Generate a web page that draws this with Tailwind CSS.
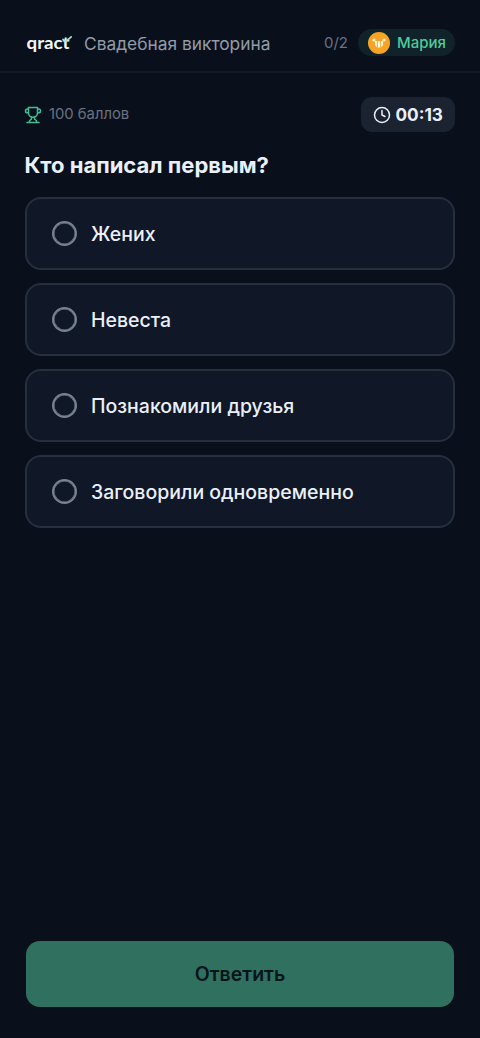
<!DOCTYPE html>
<html lang="ru">
<head>
<meta charset="utf-8">
<meta name="viewport" content="width=device-width, initial-scale=1">
<title>Свадебная викторина</title>
<script src="https://cdn.jsdelivr.net/npm/@tailwindcss/browser@4"></script>
</head>
<body class="bg-[#09101b] font-['Inter',sans-serif] text-[#eaf0fa]">
<div class="flex h-[1038px] w-[480px] flex-col">
  <header class="flex h-[73px] items-center border-b-2 border-[#121a26] pt-[14px] pr-[25px] pl-[26px]">
    <svg class="mr-[10px] h-[24px] w-[48px] shrink-0" viewBox="0 0 48 24">
      <text x="0.5" y="17.500" textLength="43" lengthAdjust="spacingAndGlyphs" font-family="Lato, sans-serif" font-weight="700" font-size="17.500" fill="#f4f8fa">qract</text>
      <path d="M37 8.300l2.800 2.200l5.400-4.600" fill="none" stroke="#a5e3d5" stroke-width="1.700" stroke-linecap="round" stroke-linejoin="round"/>
    </svg>
    <h1 class="pt-[2px] text-[17.350px] leading-6 whitespace-nowrap text-[#949ba8]">Свадебная викторина</h1>
    <span class="ml-auto pt-px text-[15px] leading-6 text-[#697283]">0/2</span>
    <div class="ml-[10px] flex h-[27px] w-[97px] items-center rounded-full bg-[#11232a] pl-[10px]">
      <svg class="mr-[7px] size-[22px] shrink-0" viewBox="0 0 22 22">
        <circle cx="11" cy="11" r="11" fill="#f7a325"/>
        <path d="M7 9h8v3.200c0 2-1.600 3.300-4 3.300s-4-1.300-4-3.300z" fill="#fff6df"/>
        <circle cx="6" cy="8" r="1.600" fill="#fff6df"/><circle cx="16" cy="8" r="1.600" fill="#fff6df"/>
        <path d="M9.400 8.500v6.500M12.600 8.500v6.500" fill="none" stroke="#f7a325" stroke-width=".9"/>
      </svg>
      <span class="text-[15px] leading-6 font-medium text-[#4fca9c]">Мария</span>
    </div>
  </header>
  <main class="flex flex-1 flex-col px-[25px] pt-[24px]">
    <div class="flex h-[35px] items-center">
      <svg class="-ml-px mr-[7px] size-[18px] shrink-0" viewBox="0 0 24 24" fill="none" stroke="#45bd91" stroke-width="2" stroke-linecap="round" stroke-linejoin="round">
        <path d="M6 9H4.500a2.500 2.500 0 0 1 0-5H6M18 9h1.500a2.500 2.500 0 0 0 0-5H18M4 22h16M10 14.660V17c0 .55-.47.98-.97 1.210C7.850 18.750 7 20.240 7 22M14 14.660V17c0 .55.47.98.97 1.210C16.150 18.750 17 20.240 17 22M18 2H6v7a6 6 0 0 0 12 0V2Z"/>
      </svg>
      <span class="text-[14.800px] text-[#697283]">100 баллов</span>
      <div class="ml-auto flex h-[35px] w-[94px] items-center rounded-[11px] bg-[#1b2230] pl-[12px]">
        <svg class="mr-[4.500px] size-[18px] shrink-0" viewBox="0 0 24 24" fill="none" stroke="#eaf0fa" stroke-width="2" stroke-linecap="round" stroke-linejoin="round">
          <circle cx="12" cy="12" r="10"/><path d="M12 6v6l4 2"/>
        </svg>
        <span class="text-[17.200px] font-bold">00:13</span>
      </div>
    </div>
    <h2 class="mt-[17px] -ml-[.5px] text-[22px] leading-8 font-bold whitespace-nowrap">Кто написал первым?</h2>
    <div class="mt-[16px] grid gap-[13px]">
      <div class="flex h-[73px] items-center gap-[14.500px] rounded-[16px] border-2 border-[#272e3d] bg-[#101726] pl-[24.500px]">
        <span class="size-[25px] rounded-full border-2 border-[#778294] shadow-[inset_0_0_0_0.500px_#778294]"></span>
        <span class="pt-[2px] text-[19.500px] font-[450]">Жених</span>
      </div>
      <div class="flex h-[73px] items-center gap-[14.500px] rounded-[16px] border-2 border-[#272e3d] bg-[#101726] pl-[24.500px]">
        <span class="size-[25px] rounded-full border-2 border-[#778294] shadow-[inset_0_0_0_0.500px_#778294]"></span>
        <span class="pt-[2px] text-[19.500px] font-[450]">Невеста</span>
      </div>
      <div class="flex h-[73px] items-center gap-[14.500px] rounded-[16px] border-2 border-[#272e3d] bg-[#101726] pl-[24.500px]">
        <span class="size-[25px] rounded-full border-2 border-[#778294] shadow-[inset_0_0_0_0.500px_#778294]"></span>
        <span class="pt-[2px] text-[19.500px] font-[450]">Познакомили друзья</span>
      </div>
      <div class="flex h-[73px] items-center gap-[14.500px] rounded-[16px] border-2 border-[#272e3d] bg-[#101726] pl-[24.500px]">
        <span class="size-[25px] rounded-full border-2 border-[#778294] shadow-[inset_0_0_0_0.500px_#778294]"></span>
        <span class="pt-[2px] text-[19.500px] font-[450]">Заговорили одновременно</span>
      </div>
    </div>
  </main>
  <footer class="px-[26px] pb-[31px]">
    <button class="block h-[66px] w-full rounded-[14px] bg-[#30705f] pt-px text-[19.500px] font-semibold text-[#07141a]">Ответить</button>
  </footer>
</div>
</body>
</html>
